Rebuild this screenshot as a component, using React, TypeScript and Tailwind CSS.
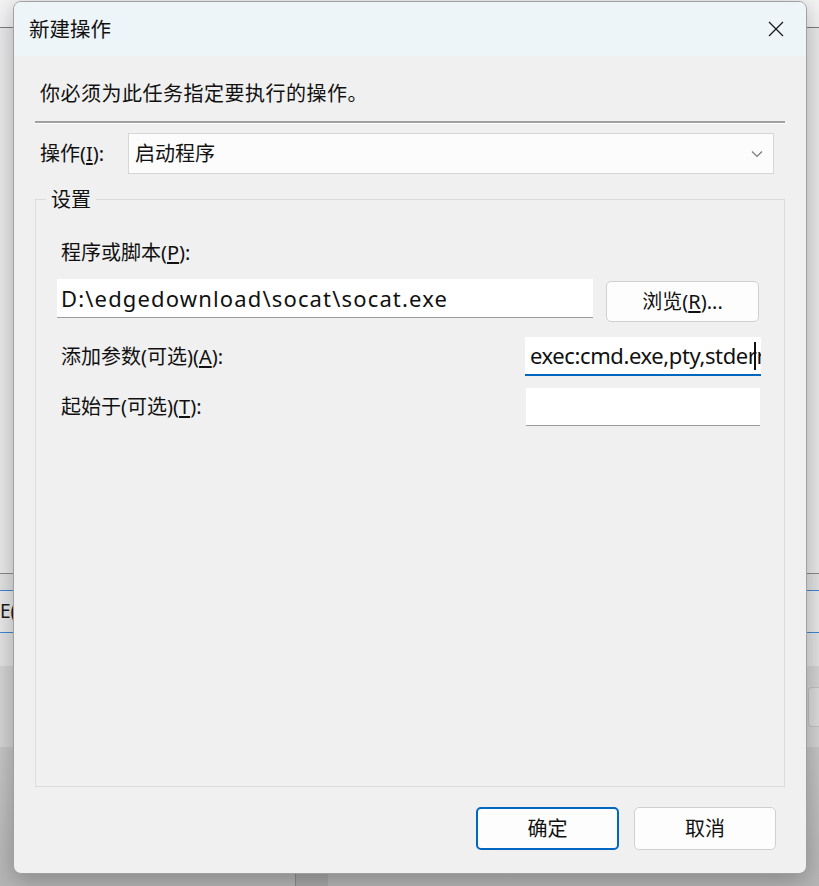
import React from 'react';

const font = { fontFamily: '"Noto Sans", "Noto Sans CJK SC", sans-serif' };

// ── Background window (partly hidden behind the dialog) ─────────────────────
function Backdrop() {
  return (
    <div className="flex h-full flex-col">
      <div className="h-[28px] shrink-0 border-b border-[#7d7d7d] bg-[#f4f4f4]" />
      <div className="h-[546px] shrink-0 border-b border-[#8a8a8a] bg-[#eaeaea]" />
      <div className="h-[92px] shrink-0 bg-[#e3e3e3] pt-[16px]">
        <div className="flex h-[43px] items-center overflow-hidden border-y border-[#3f86d6] bg-[#e9e9e9]">
          <span className="text-[19px] text-[#1a1a1a]">E(I</span>
        </div>
      </div>
      <div className="flex h-[81px] shrink-0 items-center justify-end bg-[#d4d4d4]">
        <div className="h-[40px] w-[11px] rounded-l-[4px] border border-r-0 border-[#c2c2c2] bg-[#dcdcdc]" />
      </div>
      <div className="flex flex-1 bg-gradient-to-b from-[#c6c6c6] to-[#b6b6b6]">
        <div className="ml-[295px] w-[33px] border-l border-[#8c8c8c] bg-[#a9a9a9]" />
      </div>
    </div>
  );
}

function Field({ className, children }: { className: string; children?: React.ReactNode }) {
  return <div className={`flex items-center bg-white ${className}`}>{children}</div>;
}

// ── Dialog ───────────────────────────────────────────────────────────────────
function Dialog() {
  return (
    <div className="absolute left-[13px] top-[1px] flex h-[873px] w-[794px] flex-col overflow-hidden rounded-[8px] border border-[#a0a0a0] bg-[#f0f0f0] text-[20px] text-[#111] shadow-[0_6px_24px_rgba(0,0,0,0.28)]">
      {/* title bar */}
      <div className="flex h-[54px] shrink-0 items-center justify-between bg-[#eef5f8] pl-[15px] pr-[22px]">
        <span className="text-[20.5px]">新建操作</span>
        <svg width="16" height="16" viewBox="0 0 16 16" className="text-[#1a1a1a]">
          <path d="M1 1 L15 15 M15 1 L1 15" stroke="currentColor" strokeWidth="1.3" />
        </svg>
      </div>

      <div className="flex flex-1 flex-col px-[21px]">
        <p className="mt-[24px] pl-[5px] leading-[28px] tracking-[0.5px]">你必须为此任务指定要执行的操作。</p>
        <div className="mt-[13px] h-[3px] border-t-2 border-b border-t-[#a0a0a0] border-b-white" />

        {/* action combobox */}
        <div className="mt-[9px] flex items-center">
          <span className="w-[93px] pl-[5px]">
            操作(<span className="underline underline-offset-2">I</span>):
          </span>
          <div className="mr-[11px] flex h-[41px] flex-1 items-center justify-between border border-[#d6d6d6] bg-[#fcfcfc] pl-[6px] pr-[10px]">
            <span>启动程序</span>
            <svg width="12" height="8" viewBox="0 0 12 8">
              <path d="M1 1.5 L6 6.5 L11 1.5" fill="none" stroke="#7a7a7a" strokeWidth="1.2" />
            </svg>
          </div>
        </div>

        {/* settings group */}
        <div className="relative mt-[25px] flex h-[588px] flex-col border border-[#dcdcdc] pl-[21px] pt-[39px]">
          <span className="absolute -top-[15px] left-[10px] bg-[#f0f0f0] px-[5px]">设置</span>
          <span className="pl-[4px] leading-[28px]">
            程序或脚本(<span className="underline underline-offset-2">P</span>):
          </span>

          <div className="mt-[12px] flex items-start">
            <Field className="h-[39px] w-[536px] overflow-hidden border-b border-[#9a9a9a] pl-[4px]">
              <span className="whitespace-nowrap text-[22px] tracking-[1.15px]">D:\edgedownload\socat\socat.exe</span>
            </Field>
            <button className="ml-[13px] mt-[2px] h-[41px] w-[153px] rounded-[5px] border border-[#d0d0d0] bg-[#fdfdfd]">
              浏览(<span className="underline underline-offset-2">R</span>)...
            </button>
          </div>

          <div className="mt-[15px] flex items-center">
            <span className="w-[468px] pl-[4px]">
              添加参数(可选)(<span className="underline underline-offset-2">A</span>):
            </span>
            <Field className="relative h-[39px] w-[236px] overflow-hidden border-b-2 border-[#0067c0] pl-[5px]">
              <span className="whitespace-nowrap text-[22px] tracking-[-0.4px]">exec:cmd.exe,pty,stderr</span>
              <span className="absolute right-[5px] top-[5px] h-[28px] w-[2px] bg-[#111]" />
            </Field>
          </div>

          <div className="mt-[12px] flex items-center">
            <span className="w-[469px] pl-[4px]">
              起始于(可选)(<span className="underline underline-offset-2">T</span>):
            </span>
            <Field className="h-[38px] w-[234px] border-b border-[#9a9a9a]" />
          </div>
        </div>

        {/* footer buttons */}
        <div className="mt-[20px] flex justify-end gap-[15px] pr-[9px]">
          <button className="h-[43px] w-[143px] rounded-[5px] border-2 border-[#0067c0] bg-[#fdfdfd]">确定</button>
          <button className="h-[43px] w-[142px] rounded-[5px] border border-[#d0d0d0] bg-[#fdfdfd]">取消</button>
        </div>
      </div>
    </div>
  );
}

export default function App() {
  return (
    <div className="relative h-[886px] w-[819px] overflow-hidden" style={font}>
      <Backdrop />
      <Dialog />
    </div>
  );
}
